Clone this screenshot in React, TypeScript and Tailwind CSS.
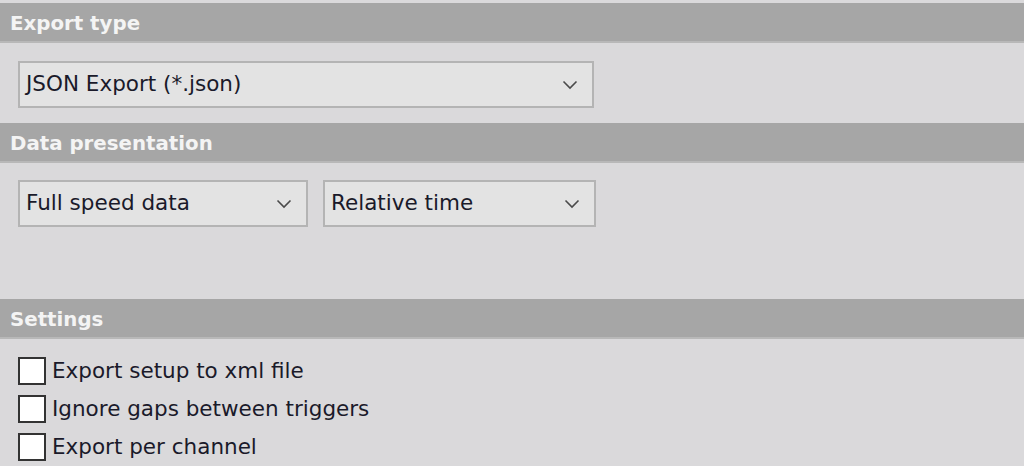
import React from 'react';

function Chevron() {
  return (
    <svg width="16" height="10" viewBox="0 0 16 10" className="shrink-0">
      <path d="M1.5 1.5 L8 8 L14.5 1.5" fill="none" stroke="#4a4a4a" strokeWidth="1.6" />
    </svg>
  );
}

function Select({ value, width }: { value: string; width: string }) {
  return (
    <div
      className={`${width} h-[47px] flex items-center justify-between pl-[6px] pr-[14px] bg-[#e3e3e3] border-2 border-[#b4b4b4] text-[#1a1a2a] text-[21.5px]`}
    >
      <span>{value}</span>
      <Chevron />
    </div>
  );
}

function SectionHeader({ title }: { title: string }) {
  return (
    <div className="h-[40px] flex items-center px-[10px] pt-[3px] bg-[#a6a6a6] border-b-2 border-[#b8b8b8] text-[#f4f4f4] font-bold text-[19.8px]">
      {title}
    </div>
  );
}

function Checkbox({ label }: { label: string }) {
  return (
    <div className="flex items-center gap-[6px] h-[38px]">
      <div className="w-[28px] h-[28px] bg-white border-2 border-[#333]" />
      <span className="text-[21.5px] text-[#1a1a2a]">{label}</span>
    </div>
  );
}

export default function App() {
  return (
    <div
      className="w-[1024px] h-[466px] overflow-hidden bg-[#dad9db] pt-[3px]"
      style={{ fontFamily: '"DejaVu Sans", Verdana, sans-serif' }}
    >
      <SectionHeader title="Export type" />
      <div className="h-[80px] px-[18px] pt-[18px]">
        <Select value="JSON Export (*.json)" width="w-[576px]" />
      </div>
      <SectionHeader title="Data presentation" />
      <div className="h-[136px] px-[18px] pt-[17px] flex gap-[15px]">
        <Select value="Full speed data" width="w-[290px]" />
        <Select value="Relative time" width="w-[273px]" />
      </div>
      <SectionHeader title="Settings" />
      <div className="px-[18px] pt-[13px] flex flex-col">
        <Checkbox label="Export setup to xml file" />
        <Checkbox label="Ignore gaps between triggers" />
        <Checkbox label="Export per channel" />
      </div>
    </div>
  );
}
